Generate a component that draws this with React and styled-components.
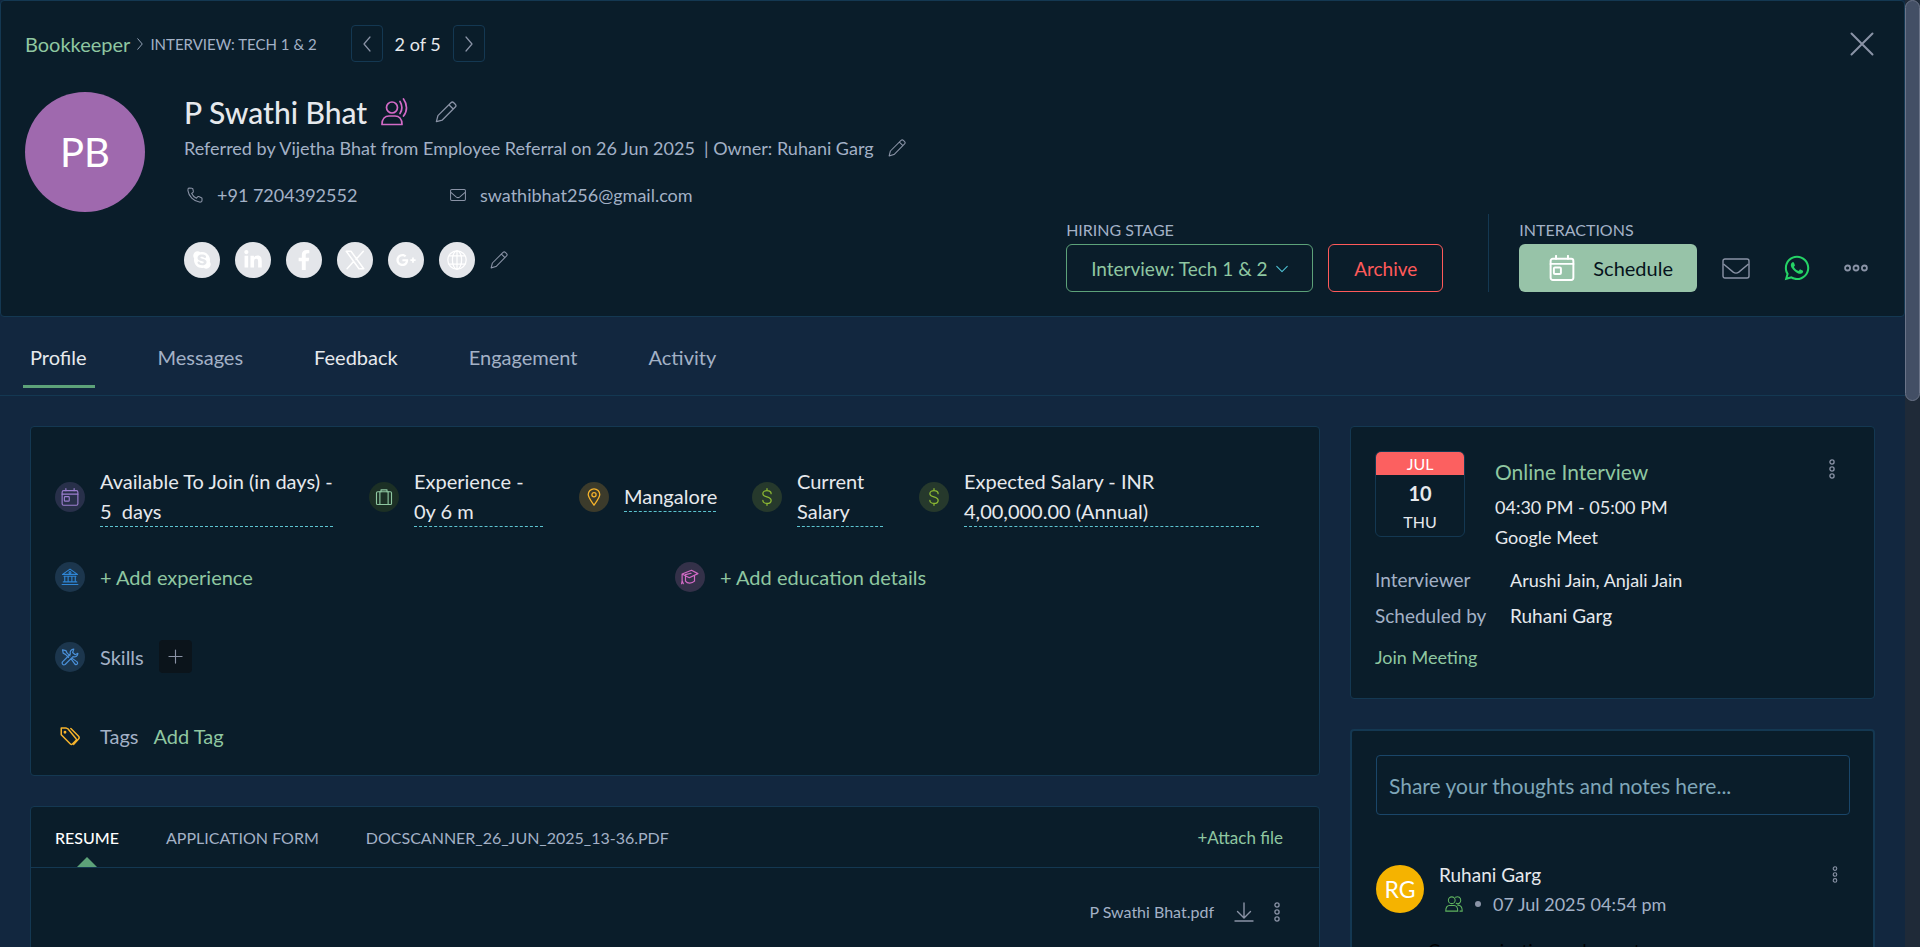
import React from 'react';
import styled, { createGlobalStyle, css } from 'styled-components';
import { FaSkype, FaLinkedinIn, FaFacebookF, FaGooglePlusG, FaWhatsapp } from 'react-icons/fa';

const colors = {
  page: '#12273f',
  panel: '#0a1d2a',
  border: '#143852',
  text: '#e6e9ed',
  muted: '#a3b1c6',
  icon: '#8a93a6',
  green: '#8fc7a1',
  greenDark: '#5da279',
  red: '#ff5a5a',
};

const GlobalStyle = createGlobalStyle`
  * {
    box-sizing: border-box;
  }

  body {
    margin: 0;
    overflow: hidden;
    background-color: ${colors.page};
    font-family: Lato, 'Liberation Sans', sans-serif;
    font-size: 18px;
    color: ${colors.text};
  }

  button,
  input,
  select {
    font-family: inherit;
  }

  a {
    color: ${colors.green};
    text-decoration: none;
  }

  svg {
    display: block;
    flex-shrink: 0;
  }
`;

const Page = styled.div`
  display: grid;
  grid-template-columns: minmax(0, 1fr) 15px;
  height: 100vh;
`;

const Content = styled.main`
  min-width: 0;
  overflow: hidden;
`;

const ScrollTrack = styled.div`
  background-color: #1f2a38;
`;

const ScrollThumb = styled.div`
  height: 401px;
  border: 1px solid #6b7488;
  border-radius: 8px;
  background-color: #434f65;
`;

const Header = styled.header`
  padding: 24px;
  border: 1px solid ${colors.border};
  border-radius: 4px;
  background-color: ${colors.panel};
`;

const TopBar = styled.div`
  display: flex;
  align-items: center;
  height: 37px;
  margin-bottom: 30px;
`;

const Crumbs = styled.nav`
  display: flex;
  align-items: center;
  gap: 4px;
  margin-right: 34px;
  color: ${colors.muted};
`;

const CrumbLink = styled.a`
  font-size: 20px;
`;

const Caps = styled.span`
  font-size: ${({ $size }) => $size || 16}px;
  line-height: 28px;
  text-transform: uppercase;
  color: ${colors.muted};
`;

const CapsLabel = styled(Caps).attrs({ as: 'label' })`
  display: block;
`;

const IconButton = styled.button`
  display: flex;
  align-items: center;
  justify-content: center;
  padding: 0;
  border: 0;
  background: none;
  color: ${({ $color }) => $color || colors.icon};
  cursor: pointer;
`;

const PagerButton = styled(IconButton)`
  width: 32px;
  height: 37px;
  border: 1px solid ${colors.border};
  border-radius: 4px;
`;

const PagerText = styled.span`
  margin: 0 12px;
`;

const CloseButton = styled(IconButton)`
  margin-left: auto;
  margin-right: 6px;
`;

const Candidate = styled.div`
  display: flex;
  min-height: 200px;
`;

const Avatar = styled.div`
  display: flex;
  align-items: center;
  justify-content: center;
  flex-shrink: 0;
  width: ${({ $size }) => $size}px;
  height: ${({ $size }) => $size}px;
  border-radius: 50%;
  background-color: ${({ $color }) => $color};
  font-size: ${({ $font }) => $font}px;
  color: #fff;
`;

const Info = styled.div`
  flex: 1;
  margin-left: 39px;
`;

const NameRow = styled.div`
  display: flex;
  align-items: center;
  height: 40px;
`;

const Name = styled.h1`
  margin: 0 14px 0 0;
  font-size: 30px;
  font-weight: 500;
`;

const NameEdit = styled(IconButton)`
  margin-left: 26px;
`;

const Referral = styled.div`
  display: flex;
  align-items: center;
  gap: 14px;
  height: 32px;
  color: ${colors.muted};
`;

const Contacts = styled.div`
  display: grid;
  grid-template-columns: 263px auto;
  justify-content: start;
  height: 32px;
  margin: 15px 0 31px;
`;

const Contact = styled.a`
  display: flex;
  align-items: center;
  gap: 14px;
  padding-left: 3px;
  color: ${colors.muted};

  svg {
    color: ${colors.icon};
  }
`;

const Socials = styled.div`
  display: flex;
  align-items: center;
  gap: 15px;
`;

const Social = styled.a`
  display: flex;
  align-items: center;
  justify-content: center;
  width: 36px;
  height: 36px;
  border-radius: 50%;
  background-color: #e4e6ea;
  font-size: 20px;
  color: #fff;
`;

const Actions = styled.div`
  display: flex;
  align-items: flex-end;
`;

const ButtonRow = styled.div`
  display: flex;
  align-items: center;
  gap: 15px;
`;

const StageSelect = styled.div`
  position: relative;
  color: #4fc3d5;

  svg {
    position: absolute;
    top: 18px;
    right: 24px;
    pointer-events: none;
  }
`;

const Select = styled.select`
  height: 48px;
  padding: 0 44px 0 24px;
  border: 1px solid ${colors.greenDark};
  border-radius: 6px;
  background: transparent;
  font-size: 19px;
  color: ${colors.green};
  appearance: none;
`;

const ArchiveButton = styled.button`
  height: 48px;
  padding: 0 25px;
  border: 1px solid ${colors.red};
  border-radius: 6px;
  background: transparent;
  font-size: 19px;
  color: ${colors.red};
`;

const Divider = styled.div`
  width: 1px;
  height: 78px;
  margin: 0 30px 0 45px;
  background-color: ${colors.border};
`;

const Interactions = styled.div`
  margin-right: 12px;
`;

const ScheduleButton = styled.button`
  display: flex;
  align-items: center;
  gap: 18px;
  height: 48px;
  padding: 0 24px 0 30px;
  border: 0;
  border-radius: 6px;
  background-color: #97c3a8;
  font-size: 20px;
  color: #06131c;

  svg {
    color: #fff;
  }
`;

const InteractionIcons = styled.div`
  display: flex;
  align-items: center;
  gap: 33px;
  margin-left: 10px;
`;

const Tabs = styled.div`
  display: flex;
  gap: 56px;
  padding: 0 23px;
  border-bottom: 1px solid ${colors.border};
`;

const Tab = styled.button`
  position: relative;
  height: 78px;
  padding: 2px 8px 0 7px;
  border: 0;
  background: none;
  font-size: 20px;
  color: ${({ $strong }) => ($strong ? colors.text : colors.muted)};

  ${({ $active }) =>
    $active &&
    css`
      &::after {
        content: '';
        position: absolute;
        left: 0;
        right: 0;
        bottom: 7px;
        height: 3px;
        background-color: ${colors.greenDark};
      }
    `}
`;

const Columns = styled.div`
  display: grid;
  grid-template-columns: minmax(0, 86fr) minmax(0, 35fr);
  gap: 30px;
  padding: 30px;
`;

const Column = styled.div`
  display: flex;
  flex-direction: column;
  gap: 30px;
`;

const Card = styled.section`
  border: ${({ $thick }) => ($thick ? 2 : 1)}px solid ${colors.border};
  border-radius: 4px;
  background-color: ${colors.panel};
`;

const DetailsCard = styled(Card)`
  padding: 39px 24px 24px;
`;

const Facts = styled.div`
  display: flex;
  align-items: center;
  gap: 36px;
  margin-bottom: 35px;
`;

const Detail = styled.div`
  display: flex;
  align-items: center;
  gap: 15px;
`;

const DetailIcon = styled.span`
  display: flex;
  align-items: center;
  justify-content: center;
  flex-shrink: 0;
  width: 30px;
  height: 30px;
  border-radius: 50%;
  background-color: ${({ $bg }) => $bg || 'transparent'};
  color: ${({ $color }) => $color};
`;

const FactText = styled.div`
  width: ${({ $width }) => $width}px;
  border-bottom: 1px dashed #5cc4d0;
  font-size: 20px;
  line-height: 30px;
  white-space: pre;
`;

const AddRow = styled.div`
  display: grid;
  grid-template-columns: 1fr 1fr;
  margin-bottom: 48px;
`;

const DetailLink = styled.a`
  font-size: 20px;
`;

const DetailLabel = styled.span`
  font-size: 20px;
  color: ${colors.muted};
`;

const AddSkill = styled(IconButton)`
  width: 33px;
  height: 33px;
  border-radius: 4px;
  background-color: #0b141b;
`;

const TagsRow = styled(Detail)`
  height: 30px;
  margin-top: 48px;
`;

const FilesBar = styled.div`
  display: flex;
  align-items: stretch;
  gap: 47px;
  height: 61px;
  padding: 0 36px 0 24px;
  border-bottom: 1px solid ${colors.border};
`;

const FileTab = styled.button`
  position: relative;
  padding: 0;
  border: 0;
  background: none;
  font-size: 16px;
  text-transform: uppercase;
  color: ${({ $active }) => ($active ? '#fff' : colors.muted)};

  ${({ $active }) =>
    $active &&
    css`
      font-weight: 500;

      &::after {
        content: '';
        position: absolute;
        bottom: 0;
        left: 50%;
        margin-left: -10px;
        border: 10px solid transparent;
        border-top: 0;
        border-bottom-color: ${colors.greenDark};
      }
    `}
`;

const AttachLink = styled.a`
  align-self: center;
  margin-left: auto;
  font-size: 17px;
`;

const FileRow = styled.div`
  display: flex;
  align-items: center;
  justify-content: flex-end;
  gap: 20px;
  height: 87px;
  padding-right: 39px;
  font-size: 16px;
  color: ${colors.muted};
`;

const MeetingCard = styled(Card)`
  padding: 24px 24px 28px;
`;

const MeetingTop = styled.div`
  display: flex;
  align-items: flex-start;
  margin-bottom: 10px;
`;

const DateBox = styled.div`
  width: 90px;
  height: 86px;
  margin-right: 30px;
  border: 1px solid ${colors.border};
  border-radius: 6px;
  overflow: hidden;
  font-size: 16px;
  text-align: center;
`;

const Month = styled.div`
  background-color: #fc6060;
  line-height: 23px;
  color: #fff;
`;

const Day = styled.div`
  font-size: 20px;
  font-weight: 700;
  line-height: 37px;
`;

const MeetingInfo = styled.div`
  flex: 1;
  padding-top: 5px;
  line-height: 30px;
`;

const MeetingTitle = styled.h2`
  margin: 0 0 4px;
  font-size: 21px;
  font-weight: 400;
  line-height: 32px;
  color: ${colors.green};
`;

const MenuButton = styled(IconButton)`
  width: 16px;
  margin: 8px 10px 0 auto;
`;

const People = styled.dl`
  display: grid;
  grid-template-columns: 135px 1fr;
  margin: 0 0 10px;
  line-height: 36px;
`;

const Term = styled.dt`
  font-size: 19px;
  color: ${colors.muted};
`;

const Person = styled.dd`
  margin: 0;
  font-size: ${({ $size }) => $size || 19}px;
`;

const JoinLink = styled.a`
  display: block;
  font-size: 18px;
  line-height: 26px;
`;

const NotesCard = styled(Card)`
  padding: 24px 23px 0 24px;
`;

const NoteInput = styled.input`
  width: 100%;
  height: 60px;
  margin-bottom: 50px;
  padding: 0 12px;
  border: 1px solid #1a4669;
  border-radius: 4px;
  background: transparent;
  font-size: 21px;
  color: ${colors.text};

  &::placeholder {
    color: #7fa6b8;
    opacity: 1;
  }
`;

const Note = styled.article`
  display: flex;
  align-items: flex-start;
`;

const NoteMeta = styled.div`
  margin-left: 15px;
`;

const NoteAuthor = styled.div`
  font-size: 19px;
  line-height: 20px;
`;

const NoteTime = styled.div`
  display: flex;
  align-items: center;
  gap: 12px;
  padding: 6px 0 0 6px;
  line-height: 26px;
  color: ${colors.muted};
`;

const Dot = styled.span`
  width: 6px;
  height: 6px;
  border-radius: 50%;
  background-color: ${colors.icon};
`;

const NoteMenu = styled(MenuButton)`
  margin: 1px 7px 0 auto;
`;

const NoteBody = styled.p`
  margin: 22px 0 0 52px;
  font-size: 18px;
  line-height: 22px;
  color: #000;
`;

const Icon = ({ size = 18, width = size, box = 24, stroke = 1.5, children }) => (
  <svg
    width={width}
    height={size}
    viewBox={`0 0 ${box} ${box}`}
    fill="none"
    stroke="currentColor"
    strokeWidth={stroke}
    strokeLinecap="round"
    strokeLinejoin="round"
    aria-hidden="true"
  >
    {children}
  </svg>
);

const Pencil = ({ size }) => (
  <Icon size={size} stroke={1.4}>
    <path d="M1.5 22.5 3.2 16 17.4 1.9a2.2 2.2 0 0 1 3.1 0l1.6 1.6a2.2 2.2 0 0 1 0 3.1L8 20.8ZM15.2 4.1l4.7 4.7" />
  </Icon>
);

const Chevron = ({ dir, size = 16 }) => (
  <Icon size={size} box={16} stroke={1.2}>
    {dir === 'left' && <path d="M11 1 5 8l6 7" />}
    {dir === 'right' && <path d="m5 1 6 7-6 7" />}
    {dir === 'down' && <path d="m2 5 6 6 6-6" />}
  </Icon>
);

const Envelope = ({ width, height, stroke }) => (
  <svg width={width} height={height} viewBox="0 0 28 21" fill="none" stroke="currentColor" strokeWidth={stroke}>
    <rect x="1" y="1" width="26" height="19" rx="2" />
    <path d="m1.500 6 9.700 8.100c1.800 1.300 3.800 1.300 5.600 0L26.500 6" />
  </svg>
);

const Calendar = ({ size, stroke }) => (
  <Icon size={size} stroke={stroke}>
    <rect x="1.500" y="3.500" width="21" height="19.500" rx="2" />
    <path d="M1.500 8.200h21M6.500 .8v2.700M17.500 .8v2.700" />
    <rect x="4.500" y="11.500" width="6.500" height="6" rx="1" />
  </Icon>
);

const Dots = ({ vertical, size }) => (
  <svg
    width={vertical ? 6 : 24}
    height={vertical ? size : 8}
    viewBox={vertical ? '0 0 6 20' : '0 0 24 8'}
    fill="none"
    stroke="currentColor"
    strokeWidth={vertical ? 1.3 : 1.8}
  >
    {[0, 1, 2].map(i =>
      vertical ? (
        <circle key={i} cx="3" cy={3 + i * 7} r="2.100" />
      ) : (
        <circle key={i} cx={3.6 + i * 8.4} cy="4" r="2.500" />
      )
    )}
  </svg>
);

const Voice = () => (
  <Icon size={28} box={28} stroke={1.7}>
    <circle cx="11" cy="9.500" r="5.500" />
    <path d="M1 26.500c0-5.600 3.200-8.500 7-8.500h6c3.800 0 7 2.900 7 8.500ZM19 3.500c2.300 3.800 2.300 8.500 0 12M22.500 1c4 5.400 4 12.300 0 17" />
  </Icon>
);

const Globe = () => (
  <Icon size={20} stroke={1.5}>
    <circle cx="12" cy="12" r="11" />
    <ellipse cx="12" cy="12" rx="5.500" ry="11" />
    <path d="M2.500 7h19M2.500 17h19M12 1v22" />
  </Icon>
);

const XLogo = () => (
  <Icon size={20} stroke={1.8}>
    <path d="M1.500 1.500h5.700L22.500 22.500h-5.700ZM22 1.500 13.300 11.200M10.500 13.500 2.500 22.500" />
  </Icon>
);

const Phone = () => (
  <Icon size={16} stroke={1.6}>
    <path d="M7.500 1.800 2.800 1.600C1.600 2 1.200 3.700 1.400 5.500 2.700 14.300 9.800 21.300 18.500 22.600c1.800.2 3.500-.3 3.900-1.500l.2-3.600c0-.7-.4-1.100-1-1.400l-4-1.700c-.7-.3-1.300-.1-1.800.5l-1.600 2c-3.200-1.500-5.700-4-7.200-7.200l2-1.600c.6-.5.8-1.100.5-1.800L8.700 2.700c-.2-.5-.6-.9-1.200-.9Z" />
  </Icon>
);

const Briefcase = () => (
  <Icon size={18}>
    <rect x="2" y="5" width="20" height="17" rx="1.500" />
    <path d="M6.500 5v17M17.500 5v17M8 5V2.500h8V5" />
  </Icon>
);

const Pin = () => (
  <Icon size={18} stroke={1.7}>
    <path d="M12 23C7.500 16.500 4.300 12.500 4.300 8.800a7.700 7.700 0 0 1 15.400 0C19.700 12.500 16.500 16.500 12 23Z" />
    <circle cx="12" cy="9" r="2.800" />
  </Icon>
);

const Dollar = () => (
  <Icon size={18} stroke={1.7}>
    <path d="M17.500 7.500C17.500 5 15.300 3.500 12 3.500S6.500 5 6.500 7.500c0 5.500 11 3 11 9 0 2.500-2.200 4-5.500 4s-5.500-1.500-5.500-4M12 1v2.500M12 20.500V23" />
  </Icon>
);

const Bank = () => (
  <Icon size={18}>
    <path d="M2 8.500 12 1.500l10 7ZM4 11h16M5 11v7M9.500 11v7M14.500 11v7M19 11v7M3 18.500h18M1.500 22h21" />
    <circle cx="12" cy="6" r="1.300" />
  </Icon>
);

const Graduate = () => (
  <Icon size={18} stroke={1.6}>
    <path d="M1.500 8 14 3l8.500 4.500L11 13ZM6 11v6.500c2.500 3.500 8.500 3.500 12 0V10M1.500 8v9M6 8.800 13.500 7M.8 21l.7-4 1.600 4" />
  </Icon>
);

const Tools = () => (
  <Icon size={18} stroke={1.6}>
    <path d="m2 2.500 4.500 1 1.500 3 4 4M2 2.500l1 4.500 3 1.500 4 4M13.500 14.500l5 7c2.500 1.500 4.500-.5 3-3l-7-5M17 1.500c-3.500 0-5.500 3-4.500 6.500L2 18.500c-1.500 2.500 1 5 3.500 3.500L16 11.500c3.500 1 6.500-1 6.500-4.500l-3.500 2L15.500 6Z" />
  </Icon>
);

const TagIcon = () => (
  <Icon size={20} stroke={1.8}>
    <path d="M1.500 2.500v8L12.500 21.500c.8.800 1.600.8 2.400 0l4.200-4.200c.8-.8.8-1.600 0-2.400L9.700 3.500 7.500 2.500ZM13 3l9 9c1.300 1.300 1.300 2.700 0 4l-5.500 6" />
    <circle cx="6" cy="7.500" r=".8" />
  </Icon>
);

const Users = () => (
  <Icon size={18} stroke={1.4}>
    <circle cx="9" cy="7" r="4.500" />
    <path d="M1 21.500c0-5 2-7.500 5-7.500h6c3 0 5 2.500 5 7.500ZM14 3c4-2 7 .5 7 4s-3 6-6 4M17 13.500c4 0 6 2.500 6 8h-3" />
  </Icon>
);

const SOCIALS = [
  ['Skype', <FaSkype />],
  ['LinkedIn', <FaLinkedinIn />],
  ['Facebook', <FaFacebookF />],
  ['X', <XLogo />],
  ['Google Plus', <FaGooglePlusG />],
  ['Website', <Globe />],
];

const FACTS = [
  {
    text: 'Available To Join (in days) -\n5 \u00a0days',
    width: 233,
    bg: '#28304a',
    color: '#9c7fd0',
    icon: <Calendar size={18} stroke={1.5} />,
  },
  { text: 'Experience -\n0y 6 m', width: 129, bg: '#1c3025', color: '#8fc7a1', icon: <Briefcase /> },
  { text: 'Mangalore', width: 92, bg: '#3c3b2b', color: '#f5b32c', icon: <Pin /> },
  { text: 'Current\nSalary', width: 86, bg: '#26392c', color: '#8cb833', icon: <Dollar /> },
  {
    text: 'Expected Salary - INR\n4,00,000.00 (Annual)',
    width: 295,
    bg: '#26392c',
    color: '#8cb833',
    icon: <Dollar />,
  },
];

const TABS = ['Profile', 'Messages', 'Feedback', 'Engagement', 'Activity'];

const FILES = ['Resume', 'Application Form', 'DocScanner_26_Jun_2025_13-36.pdf'];

const CandidateHeader = () => (
  <Header>
    <TopBar>
      <Crumbs>
        <CrumbLink href="#job">Bookkeeper</CrumbLink>
        <Chevron dir="right" size={12} />
        <Caps $size={15}>Interview: Tech 1 &amp; 2</Caps>
      </Crumbs>
      <PagerButton aria-label="Previous candidate">
        <Chevron dir="left" />
      </PagerButton>
      <PagerText>2 of 5</PagerText>
      <PagerButton aria-label="Next candidate">
        <Chevron dir="right" />
      </PagerButton>
      <CloseButton aria-label="Close">
        <Icon size={24} stroke={2}>
          <path d="m1.500 1.500 21 21M22.500 1.500l-21 21" />
        </Icon>
      </CloseButton>
    </TopBar>
    <Candidate>
      <Avatar $size={120} $font={40} $color="#9f69ae">
        PB
      </Avatar>
      <Info>
        <NameRow>
          <Name>P Swathi Bhat</Name>
          <IconButton $color="#d36bc6" aria-label="Referral">
            <Voice />
          </IconButton>
          <NameEdit aria-label="Edit name">
            <Pencil size={22} />
          </NameEdit>
        </NameRow>
        <Referral>
          <span>Referred by Vijetha Bhat from Employee Referral on 26 Jun 2025 &nbsp;| Owner: Ruhani Garg</span>
          <IconButton aria-label="Edit owner">
            <Pencil size={18} />
          </IconButton>
        </Referral>
        <Contacts>
          <Contact href="tel:+917204392552">
            <Phone />
            +91 7204392552
          </Contact>
          <Contact href="mailto:swathibhat256@gmail.com">
            <Envelope width={16} height={12} stroke={1.8} />
            swathibhat256@gmail.com
          </Contact>
        </Contacts>
        <Socials>
          {SOCIALS.map(([name, icon]) => (
            <Social key={name} href={`#${name}`} aria-label={name}>
              {icon}
            </Social>
          ))}
          <IconButton aria-label="Edit social links">
            <Pencil size={18} />
          </IconButton>
        </Socials>
      </Info>
      <Actions>
        <div>
          <CapsLabel htmlFor="stage">Hiring Stage</CapsLabel>
          <ButtonRow>
            <StageSelect>
              <Select id="stage">
                <option>Interview: Tech 1 &amp; 2</option>
              </Select>
              <Chevron dir="down" size={14} />
            </StageSelect>
            <ArchiveButton>Archive</ArchiveButton>
          </ButtonRow>
        </div>
        <Divider />
        <Interactions>
          <Caps>Interactions</Caps>
          <ButtonRow>
            <ScheduleButton>
              <Calendar size={26} stroke={1.8} />
              Schedule
            </ScheduleButton>
            <InteractionIcons>
              <IconButton aria-label="Send email">
                <Envelope width={28} height={21} stroke={1.4} />
              </IconButton>
              <IconButton $color="#25d366" aria-label="WhatsApp">
                <FaWhatsapp size={28} />
              </IconButton>
              <IconButton aria-label="More">
                <Dots />
              </IconButton>
            </InteractionIcons>
          </ButtonRow>
        </Interactions>
      </Actions>
    </Candidate>
  </Header>
);

const Details = () => (
  <DetailsCard>
    <Facts>
      {FACTS.map(({ text, width, bg, color, icon }) => (
        <Detail key={text}>
          <DetailIcon $bg={bg} $color={color}>
            {icon}
          </DetailIcon>
          <FactText $width={width}>{text}</FactText>
        </Detail>
      ))}
    </Facts>
    <AddRow>
      <Detail>
        <DetailIcon $bg="#1c364d" $color="#2f86d6">
          <Bank />
        </DetailIcon>
        <DetailLink href="#experience">+ Add experience</DetailLink>
      </Detail>
      <Detail>
        <DetailIcon $bg="#343149" $color="#d36bc6">
          <Graduate />
        </DetailIcon>
        <DetailLink href="#education">+ Add education details</DetailLink>
      </Detail>
    </AddRow>
    <Detail>
      <DetailIcon $bg="#1c364d" $color="#4a90d9">
        <Tools />
      </DetailIcon>
      <DetailLabel>Skills</DetailLabel>
      <AddSkill aria-label="Add skill">
        <Icon size={15} box={16} stroke={1.2}>
          <path d="M8 1v14M1 8h14" />
        </Icon>
      </AddSkill>
    </Detail>
    <TagsRow>
      <DetailIcon $color="#f5b32c">
        <TagIcon />
      </DetailIcon>
      <DetailLabel>Tags</DetailLabel>
      <DetailLink href="#tag">Add Tag</DetailLink>
    </TagsRow>
  </DetailsCard>
);

const Files = () => (
  <Card>
    <FilesBar>
      {FILES.map((file, i) => (
        <FileTab key={file} $active={i === 0}>
          {file}
        </FileTab>
      ))}
      <AttachLink href="#attach">+Attach file</AttachLink>
    </FilesBar>
    <FileRow>
      P Swathi Bhat.pdf
      <IconButton aria-label="Download">
        <Icon size={20} box={20} stroke={1.4}>
          <path d="M10 1v14M3.500 9.500 10 16l6.500-6.500M1 19h18" />
        </Icon>
      </IconButton>
      <IconButton aria-label="File menu">
        <Dots vertical size={20} />
      </IconButton>
    </FileRow>
  </Card>
);

const Meeting = () => (
  <MeetingCard>
    <MeetingTop>
      <DateBox>
        <Month>JUL</Month>
        <Day>10</Day>
        <div>THU</div>
      </DateBox>
      <MeetingInfo>
        <MeetingTitle>Online Interview</MeetingTitle>
        <div>04:30 PM - 05:00 PM</div>
        <div>Google Meet</div>
      </MeetingInfo>
      <MenuButton aria-label="Interview menu">
        <Dots vertical size={20} />
      </MenuButton>
    </MeetingTop>
    <People>
      <Term>Interviewer</Term>
      <Person $size={18}>Arushi Jain, Anjali Jain</Person>
      <Term>Scheduled by</Term>
      <Person>Ruhani Garg</Person>
    </People>
    <JoinLink href="#join">Join Meeting</JoinLink>
  </MeetingCard>
);

const Notes = () => (
  <NotesCard $thick>
    <NoteInput aria-label="Note" placeholder="Share your thoughts and notes here..." />
    <Note>
      <Avatar $size={48} $font={23} $color="#f5b300">
        RG
      </Avatar>
      <NoteMeta>
        <NoteAuthor>Ruhani Garg</NoteAuthor>
        <NoteTime>
          <IconButton $color="#5fb35f" aria-label="Visible to team">
            <Users />
          </IconButton>
          <Dot />
          07 Jul 2025 04:54 pm
        </NoteTime>
      </NoteMeta>
      <NoteMenu aria-label="Note menu">
        <Dots vertical size={17} />
      </NoteMenu>
    </Note>
    <NoteBody>Communication and report</NoteBody>
  </NotesCard>
);

export default function App() {
  return (
    <>
      <GlobalStyle />
      <Page>
        <Content>
          <CandidateHeader />
          <Tabs>
            {TABS.map(tab => (
              <Tab key={tab} $active={tab === 'Profile'} $strong={tab === 'Profile' || tab === 'Feedback'}>
                {tab}
              </Tab>
            ))}
          </Tabs>
          <Columns>
            <Column>
              <Details />
              <Files />
            </Column>
            <Column>
              <Meeting />
              <Notes />
            </Column>
          </Columns>
        </Content>
        <ScrollTrack>
          <ScrollThumb />
        </ScrollTrack>
      </Page>
    </>
  );
}
